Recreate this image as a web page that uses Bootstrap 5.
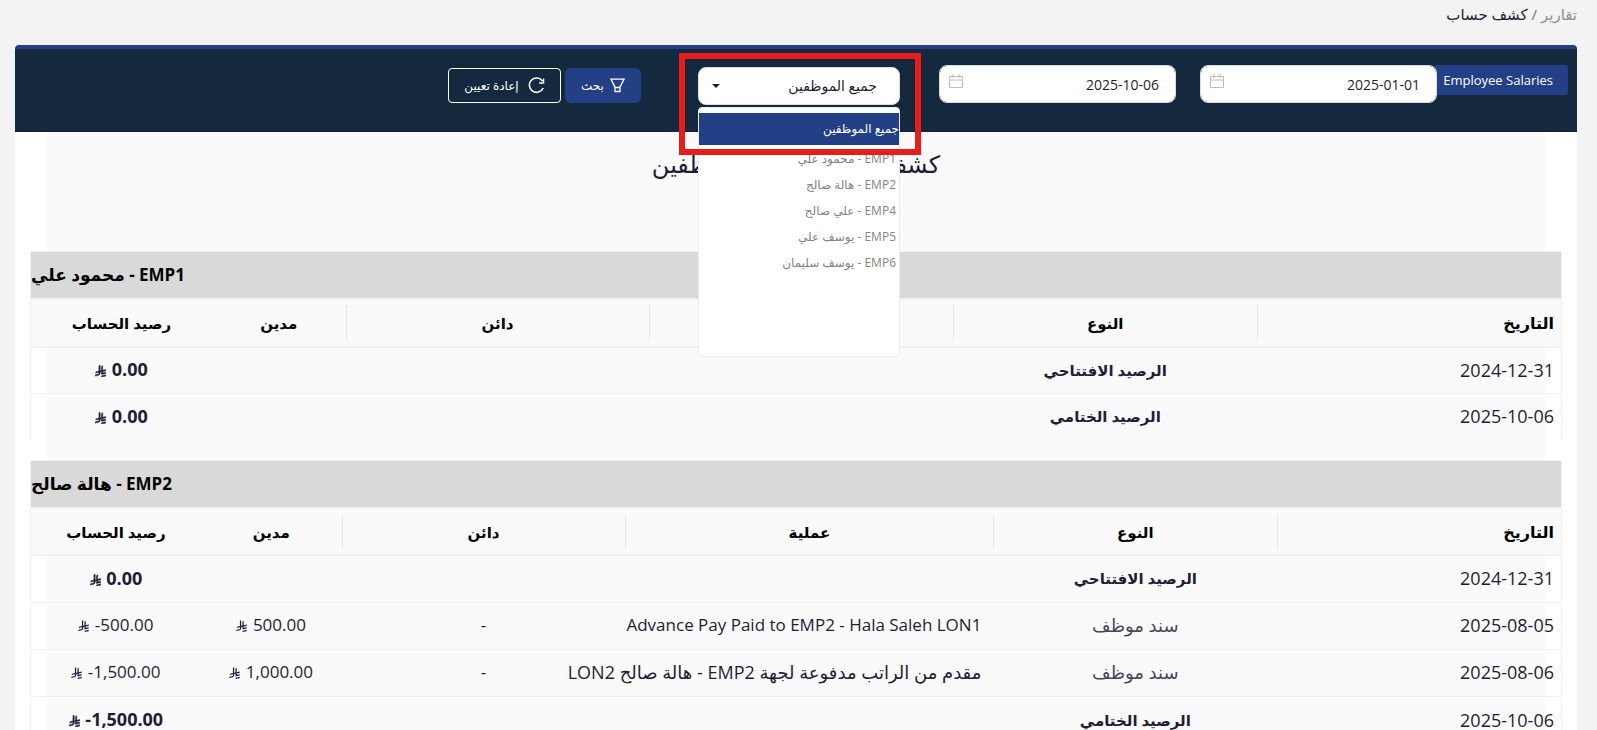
<!DOCTYPE html>
<html lang="ar" dir="rtl">
<head>
<meta charset="utf-8">
<meta name="viewport" content="width=device-width, initial-scale=1">
<title>كشف حساب</title>
<link href="https://cdn.jsdelivr.net/npm/bootstrap@5.3.0/dist/css/bootstrap.min.css" rel="stylesheet">
<style>
  :root { --brand: #233f85; --ink: #1f1d36; --edge: #f1f1f1; }
  body { background: #f3f3f3; color: var(--ink); font-family: "Open Sans", "DejaVu Sans", sans-serif; font-size: 16px; overflow-x: hidden; }
  .crumbs { height: 45px; padding: 3px 20px 0; font-size: 15px; }
  .crumbs a { color: #8d8d93; text-decoration: none; }
  .panel { margin: 0 20px 0 15px; background: #fff; border-top: 4px solid var(--brand); border-radius: 4px 4px 0 0; }
  .filters { background: #15293e; border-bottom: 1px solid #161f33; height: 83px; padding: 16px 9px 0; }
  .tag-label { background: var(--brand); color: #fff; font-size: 13px; line-height: 20px; padding: 5px 15px 5px 9px; margin-left: -3px; border-radius: 3px; white-space: nowrap; flex: 0 0 134px; height: 30px; text-align: right; }
  .date-box { flex: 0 1 237px; margin-left: 24px; }
  .date-box .form-control, .staff-box .form-select { height: 38px; border: 1px solid #dcdcdc; border-radius: 8px; font-size: 14px; color: var(--ink); }
  .date-box .form-control { padding: 0 16px 0 40px; }
  .date-box svg { position: absolute; left: 10px; top: 9px; }
  .staff-box { flex: 0 1 202px; margin: 2px 15px 0 57px; }
  .staff-box .form-select { padding: 0 22px 2px 32px; background: #fff url("data:image/svg+xml,%3Csvg xmlns='http://www.w3.org/2000/svg' viewBox='0 0 8 4'%3E%3Cpath fill='%231f1d36' d='M0 0h8L4 4z'/%3E%3C/svg%3E") no-repeat left 13px center / 8px 4px; }
  .staff-menu { position: absolute; top: 40px; right: 0; left: 0; z-index: 5; height: 250px; padding: 5px 0 0; margin: 0; background: #fff; border: 1px solid #ececec; border-radius: 4px; list-style: none; font-size: 12px; line-height: 26px; color: #848484; }
  .staff-menu li { padding: 0 3px; height: 26px; }
  .staff-menu .chosen { background: var(--brand); color: #fff; height: 32px; line-height: 32px; padding: 0; margin-bottom: 1px; }
  .callout-frame { position: absolute; top: -14px; left: -19px; right: -21px; height: 102px; border: 6px solid #e71d1c; z-index: 6; pointer-events: none; }
  .tool-btn { height: 35px; margin: 3px 0 0 4px; font-size: 12px; color: #fff; border-radius: 4px; padding: 0 14px; gap: 6px; white-space: nowrap; }
  .tool-btn:hover { color: #fff; }
  .go-btn { background: var(--brand); flex: 0 0 76px; border-radius: 6px; }
  .reset-btn { border: 1px solid #fff; flex: 0 0 113px; gap: 9px; }
  .report { margin: 0 32px; background: #fafafa; }
  .report h1 { font-size: 24px; line-height: 36px; padding: 14px 0 0; height: 119px; margin: 0; font-weight: 400; text-align: center; }
  .ledger { width: calc(100% + 34px); margin: 0 -17px 20px; table-layout: fixed; border: 1px solid var(--edge); border-bottom: 0; border-collapse: separate; border-spacing: 0; font-size: 17px; line-height: 26px; }
  .ledger .owner { background: #d9d9d9; color: #000; text-align: left; height: 46px; padding: 0; font-weight: 700; font-size: 17px; }
  .ledger .heads th { height: 50px; border-top: 2px solid var(--edge); border-bottom: 2px solid var(--edge); background: #fafafa; color: #000; text-align: center; font-weight: 700; font-size: 15px; padding: 0 8px; position: relative; }
  .ledger .heads .ruled::after { content: ""; position: absolute; left: 0; top: 5px; height: 36px; border-left: 1px solid #e6e6e6; }
  .ledger td { height: 46px; padding: 0 12px 2px; text-align: center; white-space: nowrap; border-bottom: 1px solid var(--edge); }
  .ledger tbody tr:last-child td { border-bottom: 0; }
  .ledger.second td { height: 47px; }
  .ledger.second .heads th { height: 49px; }
  .ledger td:first-child { text-align: right; padding: 0 7px 2px; font-size: 18px; }
  .ledger .heads th:first-child { text-align: right; padding: 0 7px; font-size: 16px; }
  .ledger td.details { text-align: right; }
  .ledger strong, .ledger .arabic { font-size: 18px; }
  .ledger .kind { font-size: 15px; font-weight: 700; }
  .ledger .faint { color: #46465a; font-size: 18px; }
  .sar { width: 11px; height: 12px; margin-right: 1px; fill: currentColor; vertical-align: -1px; }
  strong .sar { stroke: currentColor; stroke-width: 50px; }
</style>
</head>
<body>
<svg class="d-none" aria-hidden="true">
  <symbol id="riyal" viewBox="0 0 1124 1256"><path d="M699.62,1113.02c-20.06,44.48-33.32,92.75-38.4,143.37l424.51-90.24c20.06-44.47,33.31-92.75,38.4-143.37l-424.51,90.24Z"/><path d="M1085.73,895.8c20.06-44.47,33.32-92.75,38.4-143.37l-330.68,70.33v-135.2l292.27-62.11c20.06-44.47,33.32-92.75,38.4-143.37l-330.68,70.27V66.13c-50.67,28.45-95.67,66.32-132.25,110.99v403.35l-132.25,28.11V0c-50.67,28.44-95.67,66.32-132.25,110.99v525.69l-295.91,62.88c-20.06,44.47-33.33,92.75-38.42,143.37l334.33-71.05v170.26l-358.3,76.14c-20.06,44.47-33.32,92.75-38.4,143.37l375.04-79.7c30.53-6.35,56.77-24.4,73.83-49.24l68.78-101.97c7.14-10.57,11.3-23.29,11.3-36.99v-149.98l132.25-28.11v270.4l424.53-90.28Z"/></symbol>
  <symbol id="calendar" viewBox="0 0 14 15"><path d="M.5 2.5h13v11H.5zM.5 6h13M4 0v4M10 0v4" fill="none" stroke="#bdbdbd"/></symbol>
</svg>

<nav class="crumbs" aria-label="مسار التنقل"><a href="#">تقارير</a> <span class="text-secondary">/</span> كشف حساب</nav>

<main class="panel">
  <form class="filters d-flex align-items-start">
    <span class="tag-label" dir="ltr">Employee Salaries</span>
    <div class="date-box position-relative">
      <input class="form-control" type="text" value="2025-01-01" aria-label="من تاريخ">
      <svg width="14" height="15" aria-hidden="true"><use href="#calendar"/></svg>
    </div>
    <div class="date-box position-relative">
      <input class="form-control" type="text" value="2025-10-06" aria-label="إلى تاريخ">
      <svg width="14" height="15" aria-hidden="true"><use href="#calendar"/></svg>
    </div>
    <div class="staff-box position-relative">
      <select class="form-select" aria-label="الموظف"><option>جميع الموظفين</option></select>
      <ul class="staff-menu">
        <li class="chosen">جميع الموظفين</li>
        <li>EMP1 - محمود علي</li>
        <li>EMP2 - هالة صالح</li>
        <li>EMP4 - علي صالح</li>
        <li>EMP5 - يوسف علي</li>
        <li>EMP6 - يوسف سليمان</li>
      </ul>
      <div class="callout-frame"></div>
    </div>
    <button type="submit" class="btn tool-btn go-btn d-flex align-items-center justify-content-center">
      <svg width="15" height="15" viewBox="0 0 15 15" fill="none" stroke="#fff" stroke-width="1.3" aria-hidden="true"><path d="M1 1.2h13L10 9v4.500H5V9zM5 9.500h5M1 1.200L5 9.500"/></svg>
      بحث
    </button>
    <button type="reset" class="btn tool-btn reset-btn d-flex align-items-center justify-content-center">
      <svg width="17" height="17" viewBox="0 0 17 17" fill="none" stroke="#fff" stroke-width="1.6" aria-hidden="true"><path d="M14.600 4.200A7.200 7.200 0 1 0 15.200 11"/><path d="M15.600 1.500v4.500h-4.500" stroke-width="1.300"/></svg>
      إعادة تعيين
    </button>
  </form>

  <section class="report">
    <h1>كشف حساب جميع الموظفين</h1>

    <table class="ledger">
      <colgroup><col style="width:19.86%"><col style="width:19.86%"><col style="width:19.86%"><col style="width:19.86%"><col style="width:8.75%"><col style="width:11.81%"></colgroup>
      <thead>
        <tr><th class="owner" colspan="6">EMP1 - محمود علي</th></tr>
        <tr class="heads"><th class="ruled">التاريخ</th><th class="ruled">النوع</th><th class="ruled">عملية</th><th class="ruled">دائن</th><th>مدين</th><th>رصيد الحساب</th></tr>
      </thead>
      <tbody>
        <tr><td>2024-12-31</td><td class="kind">الرصيد الافتتاحي</td><td></td><td></td><td></td><td><strong dir="ltr"><svg class="sar"><use href="#riyal"/></svg> 0.00</strong></td></tr>
        <tr><td>2025-10-06</td><td class="kind">الرصيد الختامي</td><td></td><td></td><td></td><td><strong dir="ltr"><svg class="sar"><use href="#riyal"/></svg> 0.00</strong></td></tr>
      </tbody>
    </table>

    <table class="ledger second mb-0">
      <colgroup><col style="width:18.55%"><col style="width:18.55%"><col style="width:24.05%"><col style="width:18.55%"><col style="width:9.2%"><col style="width:11.1%"></colgroup>
      <thead>
        <tr><th class="owner" colspan="6">EMP2 - هالة صالح</th></tr>
        <tr class="heads"><th class="ruled">التاريخ</th><th class="ruled">النوع</th><th class="ruled">عملية</th><th class="ruled">دائن</th><th>مدين</th><th>رصيد الحساب</th></tr>
      </thead>
      <tbody>
        <tr><td>2024-12-31</td><td class="kind">الرصيد الافتتاحي</td><td></td><td></td><td></td><td><strong dir="ltr"><svg class="sar"><use href="#riyal"/></svg> 0.00</strong></td></tr>
        <tr><td>2025-08-05</td><td class="faint">سند موظف</td><td class="details"><bdi>Advance Pay Paid to EMP2 - Hala Saleh LON1</bdi></td><td>-</td><td><span dir="ltr"><svg class="sar"><use href="#riyal"/></svg> 500.00</span></td><td><span dir="ltr"><svg class="sar"><use href="#riyal"/></svg> -500.00</span></td></tr>
        <tr><td>2025-08-06</td><td class="faint">سند موظف</td><td class="details arabic">مقدم من الراتب مدفوعة لجهة EMP2 - هالة صالح LON2</td><td>-</td><td><span dir="ltr"><svg class="sar"><use href="#riyal"/></svg> 1,000.00</span></td><td><span dir="ltr"><svg class="sar"><use href="#riyal"/></svg> -1,500.00</span></td></tr>
        <tr><td>2025-10-06</td><td class="kind">الرصيد الختامي</td><td></td><td></td><td></td><td><strong dir="ltr"><svg class="sar"><use href="#riyal"/></svg> -1,500.00</strong></td></tr>
      </tbody>
    </table>
  </section>
</main>
<script src="https://cdn.jsdelivr.net/npm/bootstrap@5.3.0/dist/js/bootstrap.bundle.min.js"></script>
</body>
</html>
